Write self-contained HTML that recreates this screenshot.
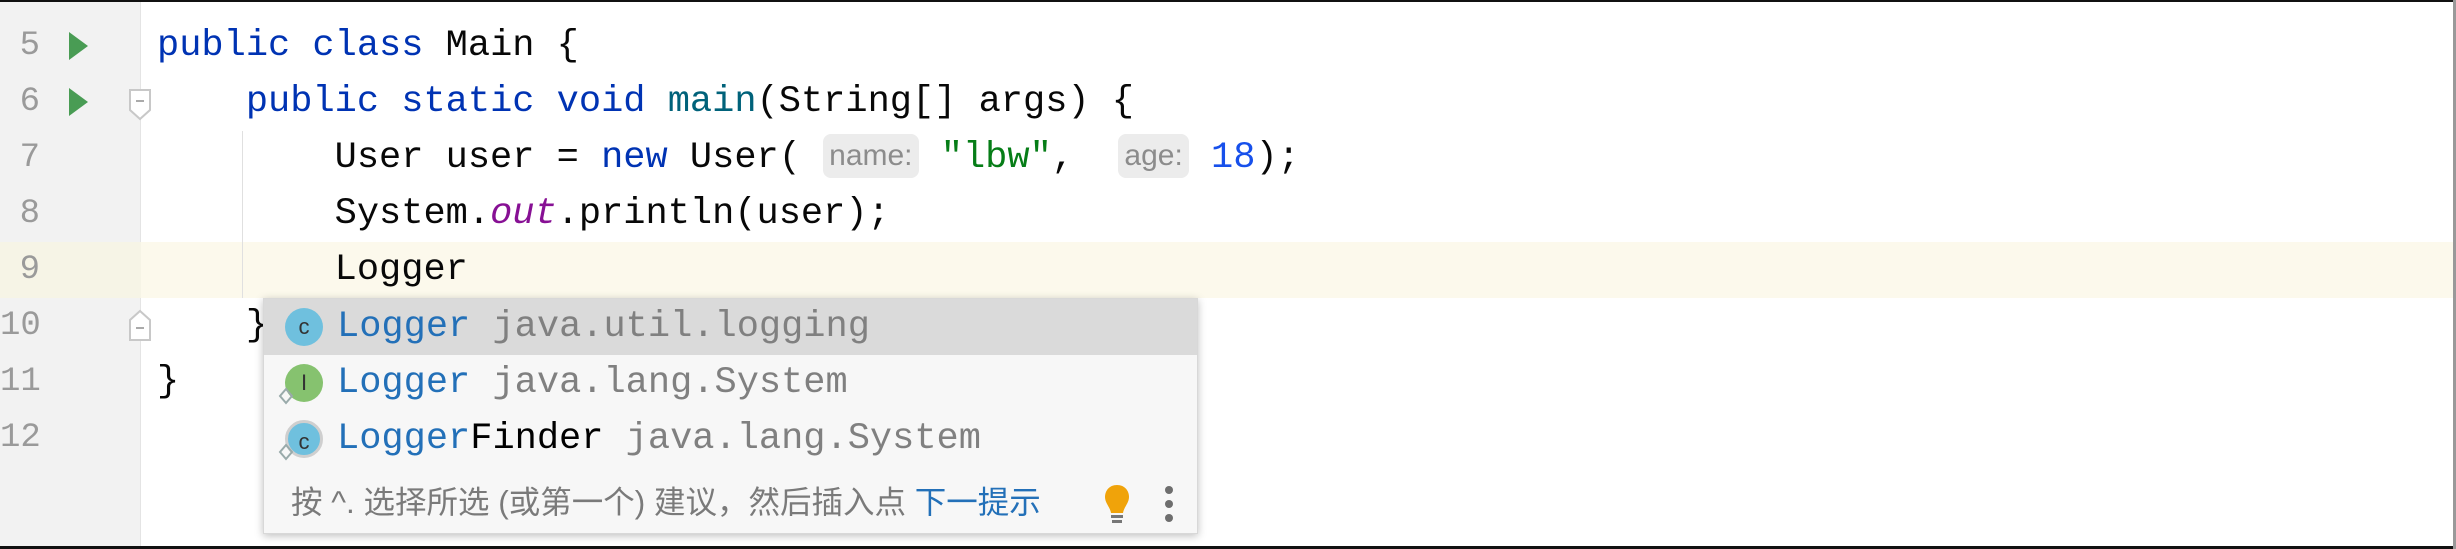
<!DOCTYPE html>
<html><head><meta charset="utf-8"><style>
*{margin:0;padding:0;box-sizing:border-box}
body{width:2456px;height:549px;overflow:hidden;background:#fff;position:relative;font-family:"Liberation Mono",monospace}
.top{position:absolute;left:0;top:0;width:2456px;height:2px;background:#111}
.bot{position:absolute;left:0;top:546px;width:2456px;height:3px;background:#111}
.rt{position:absolute;left:2453px;top:0;width:3px;height:549px;background:#999}
.gut{position:absolute;left:0;top:2px;width:141px;height:544px;background:#f2f2f2;border-right:1px solid #e4e4e4}
.hl{position:absolute;left:0;top:242px;width:2453px;height:56px;background:#fcf9ec}
.hlg{position:absolute;left:0;top:242px;width:141px;height:56px;background:#f6f4e6}
.ln{position:absolute;left:0;width:40px;text-align:right;font-size:34px;color:#9a9a9a;height:56px;line-height:56px;font-family:"Liberation Mono",monospace}
.code{position:absolute;left:157px;font-size:37px;height:56px;line-height:56px;color:#080808;white-space:pre}
.k{color:#0033b3}.m{color:#00627a}.s{color:#067d17}.n{color:#1750eb}.o{color:#871094;font-style:italic}
.inl{display:inline-block;background:#ececec;color:#8c8c8c;font-family:"Liberation Sans",sans-serif;font-size:30px;line-height:44px;height:44px;border-radius:8px;padding:0 6px;vertical-align:2px}
.run{position:absolute;left:69px;width:0;height:0;border-top:14px solid transparent;border-bottom:14px solid transparent;border-left:19px solid #499c54}
.guide{position:absolute;left:242px;top:131px;width:1px;height:167px;background:#e0e0e0}
.pop{position:absolute;left:263px;top:298px;width:935px;height:236px;background:#f7f7f7;box-shadow:0 2px 8px rgba(0,0,0,.25);border:1px solid #d8d8d8}
.row{position:absolute;left:0;width:933px;height:56px;line-height:56px;font-size:37px;white-space:pre}
.sel{background:#dadada}
.b{color:#2370b8}.g{color:#808080}
.ic{position:absolute;left:21px;width:38px;height:38px;border-radius:50%;font-family:"Liberation Sans",sans-serif;font-size:22px;text-align:center;line-height:38px;color:#333}
.rt2{position:absolute;left:73px;top:0}
.foot{position:absolute;left:27px;top:181px;font-family:"Liberation Sans","Noto Sans CJK SC",sans-serif;font-size:31.5px;color:#7a7a7a;line-height:44px;white-space:pre}
</style></head><body>
<div class="gut"></div>
<div class="hl"></div><div class="hlg"></div>
<div class="top"></div><div class="bot"></div><div class="rt"></div>

<div class="ln" style="top:18px">5</div>
<div class="ln" style="top:74px">6</div>
<div class="ln" style="top:130px">7</div>
<div class="ln" style="top:186px">8</div>
<div class="ln" style="top:242px">9</div>
<div class="ln" style="top:298px">10</div>
<div class="ln" style="top:354px">11</div>
<div class="ln" style="top:410px">12</div>

<div class="run" style="top:32px"></div>
<div class="run" style="top:88px"></div>

<svg style="position:absolute;left:128px;top:88px" width="26" height="34"><path d="M2 2H22V22L12 31L2 22Z" fill="#fff" stroke="#c8c8c8" stroke-width="2"/><path d="M8 13H16" stroke="#aaa" stroke-width="2"/></svg>
<svg style="position:absolute;left:128px;top:308px" width="26" height="34"><path d="M2 32H22V12L12 3L2 12Z" fill="#fff" stroke="#c8c8c8" stroke-width="2"/><path d="M8 20H16" stroke="#aaa" stroke-width="2"/></svg>

<div class="guide"></div>

<div class="code" style="top:18px"><span class="k">public class</span> Main {</div>
<div class="code" style="top:74px">    <span class="k">public static void</span> <span class="m">main</span>(String[] args) {</div>
<div class="code" style="top:130px">        User user = <span class="k">new</span> User( <span class="inl">name:</span> <span class="s">"lbw"</span>,  <span class="inl">age:</span> <span class="n">18</span>);</div>
<div class="code" style="top:186px">        System.<span class="o">out</span>.println(user);</div>
<div class="code" style="top:242px">        Logger</div>
<div class="code" style="top:298px">    }</div>
<div class="code" style="top:354px">}</div>

<div class="pop">
  <div class="row sel" style="top:0"><div class="ic" style="top:9px;background:#6fc0de">c</div><span class="rt2"><span class="b">Logger</span> <span class="g">java.util.logging</span></span></div>
  <div class="row" style="top:56px"><div class="ic" style="top:9px;background:#86c26f">I</div><svg style="position:absolute;left:14px;top:32px" width="16" height="18"><path d="M8 2L14 9L8 16L2 9Z" fill="none" stroke="#9aa" stroke-width="2"/></svg><span class="rt2"><span class="b">Logger</span> <span class="g">java.lang.System</span></span></div>
  <div class="row" style="top:112px"><div class="ic" style="top:9px;background:#6fc0de;border:3px solid #cfcfcf">c</div><svg style="position:absolute;left:14px;top:32px" width="16" height="18"><path d="M8 2L14 9L8 16L2 9Z" fill="none" stroke="#9aa" stroke-width="2"/></svg><span class="rt2"><span class="b">Logger</span>Finder <span class="g">java.lang.System</span></span></div>
  <div class="foot">按 ^. 选择所选 (或第一个) 建议，然后插入点 <span style="color:#2370b8">下一提示</span></div>
  <svg style="position:absolute;left:838px;top:184px" width="30" height="42"><path d="M15 2C7 2 3 8 3 14C3 20 8 24 9 30H21C22 24 27 20 27 14C27 8 23 2 15 2Z" fill="#f0a30a"/><rect x="9" y="32" width="12" height="3" fill="#777"/><rect x="10" y="37" width="10" height="3" fill="#777"/></svg>
  <svg style="position:absolute;left:898px;top:186px" width="14" height="40"><circle cx="7" cy="5" r="4" fill="#6e6e6e"/><circle cx="7" cy="19" r="4" fill="#6e6e6e"/><circle cx="7" cy="33" r="4" fill="#6e6e6e"/></svg>
</div>
</body></html>
